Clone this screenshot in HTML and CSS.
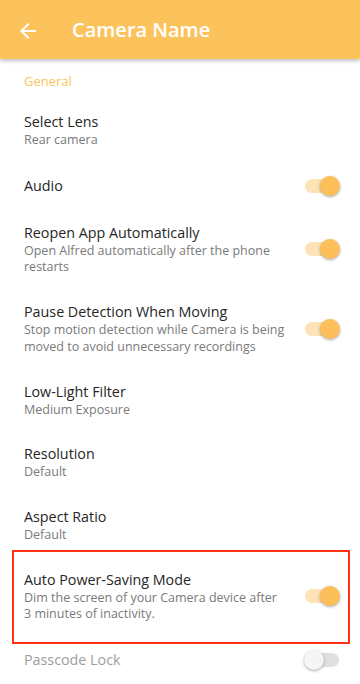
FILE: index.html
```html
<!DOCTYPE html>
<html lang="en">
<head>
<meta charset="utf-8">
<title>Camera Name</title>
<link rel="stylesheet" href="styles.css">
</head>
<body>
<header class="appbar">
  <svg class="back" width="24" height="24" viewBox="0 0 24 24"><path d="M20 11H7.83l5.59-5.59L12 4l-8 8 8 8 1.41-1.41L7.83 13H20v-2z" fill="#fff"/></svg>
  <h1 class="title">Camera Name</h1>
</header>
<main class="list">
  <div class="section">General</div>

  <div class="row">
    <div class="text"><div class="t">Select Lens</div><div class="s">Rear camera</div></div>
  </div>

  <div class="row">
    <div class="text"><div class="t">Audio</div></div>
    <div class="switch on"><span class="track"></span><span class="thumb"></span></div>
  </div>

  <div class="row">
    <div class="text"><div class="t">Reopen App Automatically</div><div class="s">Open Alfred automatically after the phone restarts</div></div>
    <div class="switch on"><span class="track"></span><span class="thumb"></span></div>
  </div>

  <div class="row">
    <div class="text"><div class="t">Pause Detection When Moving</div><div class="s">Stop motion detection while Camera is being moved to avoid unnecessary recordings</div></div>
    <div class="switch on"><span class="track"></span><span class="thumb"></span></div>
  </div>

  <div class="row">
    <div class="text"><div class="t">Low-Light Filter</div><div class="s">Medium Exposure</div></div>
  </div>

  <div class="row">
    <div class="text"><div class="t">Resolution</div><div class="s">Default</div></div>
  </div>

  <div class="row">
    <div class="text"><div class="t">Aspect Ratio</div><div class="s">Default</div></div>
  </div>

  <div class="row highlighted">
    <div class="text"><div class="t">Auto Power-Saving Mode</div><div class="s">Dim the screen of your Camera device after 3 minutes of inactivity.</div></div>
    <div class="switch on"><span class="track"></span><span class="thumb"></span></div>
  </div>

  <div class="row disabled">
    <div class="text"><div class="t">Passcode Lock</div></div>
    <div class="switch"><span class="track"></span><span class="thumb"></span></div>
  </div>
</main>
</body>
</html>
```

FILE: styles.css
```css
* { box-sizing: border-box; }
html, body { margin: 0; padding: 0; }
body {
  width: 360px;
  height: 684px;
  overflow: hidden;
  background: #fff;
  font-family: "Open Sans", "Noto Sans", sans-serif;
  color: #212121;
}
.appbar {
  position: relative;
  z-index: 2;
  height: 59px;
  background: #fcc35d;
  display: flex;
  align-items: center;
  box-shadow: 0 2px 4px rgba(0,0,0,0.25);
}
.back {
  margin-left: 16px;
  margin-top: 2px;
  flex: none;
}
.title {
  margin: 0 0 0 32px;
  font-size: 20px;
  font-weight: 600;
  color: #fff;
  line-height: 26px;
}
.list { position: relative; }
.section {
  padding: 13px 24px 0;
  font-size: 13px;
  line-height: 18px;
  font-weight: 500;
  color: #fcc35d;
  height: 40px;
}
.row {
  position: relative;
  display: flex;
  align-items: center;
  min-height: 48px;
  padding-left: 24px;
  padding-right: 20px;
}
.text {
  flex: 1;
  padding: 13px 0;
  max-width: 262px;
  margin-right: auto;
}
.t {
  font-size: 14.3px;
  line-height: 20px;
  color: #262626;
}
.s {
  font-size: 12.5px;
  line-height: 16.7px;
  color: #7a7a7a;
}
.disabled .t { color: #9e9e9e; }
.highlighted::after {
  content: "";
  position: absolute;
  left: 12px;
  right: 10px;
  top: -7px;
  bottom: -8px;
  border: 2px solid #ff3314;
  pointer-events: none;
}
.switch {
  position: relative;
  flex: none;
  width: 36px;
  height: 20px;
}
.track {
  position: absolute;
  left: 1px;
  right: 1px;
  top: 3px;
  height: 14px;
  border-radius: 7px;
  background: #e0e0e0;
}
.thumb {
  position: absolute;
  left: 0;
  top: 0;
  width: 20px;
  height: 20px;
  border-radius: 50%;
  background: #f5f5f5;
  box-shadow: 0 1px 3px rgba(0,0,0,0.35);
}
.switch.on .track { background: #fde3b5; }
.switch.on .thumb { left: 16px; background: #fdbf5a; }
```
